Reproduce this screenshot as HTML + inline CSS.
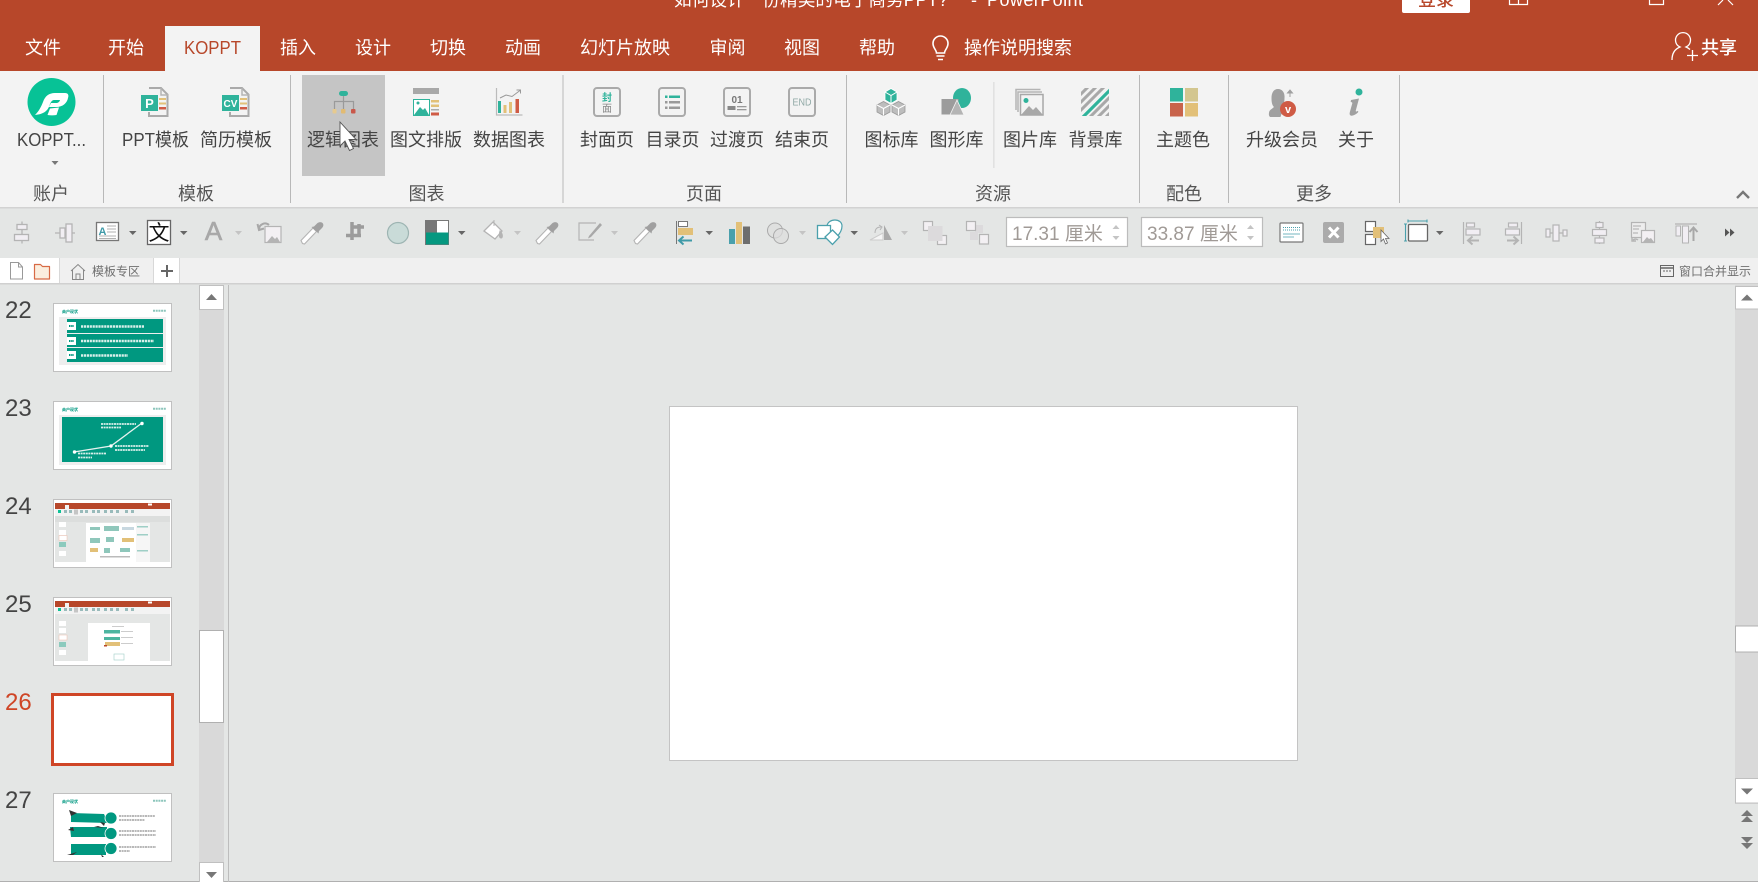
<!DOCTYPE html>
<html lang="zh"><head><meta charset="utf-8"><title>PowerPoint</title>
<style>
html,body{margin:0;padding:0;width:1758px;height:882px;overflow:hidden;background:#e4e6e5}
svg{position:absolute;left:0;top:0;display:block}
text{font-family:"Liberation Sans","Noto Sans CJK SC",sans-serif}
.tab{font-size:18px;fill:#fff;text-anchor:middle}
.lb{font-size:18px;fill:#444;text-anchor:middle}
.gr{font-size:18px;fill:#555;text-anchor:middle}
.num{font-size:24px;fill:#444}
.o{fill:none;stroke:#aaa;stroke-width:2}
.g{fill:none;stroke:#b4b4b4;stroke-width:1.5}
</style></head><body>
<svg width="1758" height="882" viewBox="0 0 1758 882" xmlns="http://www.w3.org/2000/svg">
<defs>
<filter id="b" x="40" y="295" width="140" height="575" filterUnits="userSpaceOnUse"><feGaussianBlur stdDeviation="0.35"/></filter>
<clipPath id="hc"><rect x="1081" y="88" width="28" height="28"/></clipPath>
</defs>
<!-- backgrounds -->
<rect width="1758" height="882" fill="#e4e6e5"/>
<rect width="1758" height="71" fill="#b7472a"/>
<rect y="71" width="1758" height="136" fill="#f3f3f3"/>
<rect y="207" width="1758" height="1.5" fill="#d2d2d2"/>
<rect y="258" width="1758" height="25" fill="#f0f0f0"/>
<rect y="283" width="1758" height="1.5" fill="#d0d0d0"/>
<rect y="258" width="59" height="25" fill="#fff"/>
<rect x="153" y="258" width="26" height="25" fill="#fff"/>
<rect x="59" y="258" width="1" height="25" fill="#d8d8d8"/>
<rect x="153" y="258" width="1" height="25" fill="#d8d8d8"/>
<rect x="179" y="258" width="1" height="25" fill="#d8d8d8"/>
<rect y="881" width="1758" height="1" fill="#b0b0b0"/>

<!-- title -->
<text x="674" y="6" font-size="18" fill="#fff" textLength="274" lengthAdjust="spacingAndGlyphs">如何设计一份精美的电子商务PPT?</text>
<text x="971" y="6" font-size="18" fill="#fff">-</text>
<text x="987" y="6" font-size="18" fill="#fff" textLength="96" lengthAdjust="spacing">PowerPoint</text>
<path d="M1402 0h68v11a2 2 0 0 1-2 2h-64a2 2 0 0 1-2-2z" fill="#fff"/>
<text x="1436" y="6" font-size="18" fill="#b7472a" text-anchor="middle" font-weight="500">登录</text>
<path d="M1509.500 0v4.500h18V0M1518.500 0v4.500" fill="none" stroke="#fff" stroke-width="1.200"/>
<path d="M1649.500 0v4.500h14V0" fill="none" stroke="#fff" stroke-width="1.200"/>
<path d="M1718 5l5-5M1733 5l-5-5" fill="none" stroke="#fff" stroke-width="1.200"/>

<!-- tabs -->
<rect x="165" y="26" width="95" height="45" fill="#f3f3f3"/>
<text class="tab" x="43" y="54">文件</text>
<text class="tab" x="126" y="54">开始</text>
<text class="tab" x="212.500" y="54" style="fill:#b7472a" textLength="57" lengthAdjust="spacingAndGlyphs">KOPPT</text>
<text class="tab" x="298" y="54">插入</text>
<text class="tab" x="373" y="54">设计</text>
<text class="tab" x="448" y="54">切换</text>
<text class="tab" x="523" y="54">动画</text>
<text class="tab" x="625" y="54">幻灯片放映</text>
<text class="tab" x="727.500" y="54">审阅</text>
<text class="tab" x="802" y="54">视图</text>
<text class="tab" x="877" y="54">帮助</text>
<path d="M936.500 53c0-3-3.500-5-3.500-9.500a7.500 7.500 0 0 1 15 0c0 4.500-3.500 6.500-3.500 9.500zM936.500 56h8M938 59.500h5" fill="none" stroke="#fff" stroke-width="1.600"/>
<text class="tab" x="1018" y="54">操作说明搜索</text>
<path d="M1672 60c0-7 3-11 8-13a7.500 7.500 0 1 1 6 0c1.500.6 3 1.500 4 2.500M1687 55.500h11M1692.500 50v11" fill="none" stroke="#fff" stroke-width="1.300"/>
<text class="tab" x="1719" y="54" font-weight="500">共享</text>

<!-- ribbon separators -->
<g fill="#b8b8b8">
<rect x="103" y="75" width="1" height="128"/><rect x="290" y="75" width="1" height="128"/><rect x="562.500" y="75" width="1" height="128"/>
<rect x="846" y="75" width="1" height="128"/><rect x="1139" y="75" width="1" height="128"/><rect x="1228" y="75" width="1" height="128"/><rect x="1399" y="75" width="1" height="128"/>
<rect x="993.500" y="82" width=".8" height="86" fill="#cfcfcf"/>
</g>
<rect x="302" y="75" width="83" height="101" fill="#c5c5c5"/>

<!-- logo -->
<ellipse cx="51.500" cy="102" rx="24" ry="24" fill="#07c296"/>
<path d="M35 115c4-4 6-8 8-13 2-6 6-9 12-9h10c3 0 4 2 3 5-1 5-5 9-12 9h-7l2-4h5c2 0 3.500-1 4-3H54c-2 0-3 2-4 4-2 7-6 10-15 11z" fill="#fff"/>
<path d="M50 108.500l9-1-2.500 7.500c-3 .5-6 .5-9 0z" fill="#fff"/>
<text class="lb" x="51.500" y="146" textLength="69" lengthAdjust="spacingAndGlyphs">KOPPT...</text>
<path d="M51.500 161h7l-3.500 4z" fill="#777"/>

<!-- PPT / CV -->
<path d="M149 88h12l6.500 6.500V116H149V112" class="o" stroke-width="1.500"/><path d="M161 88v7h7" class="g"/>
<rect x="141" y="95" width="17" height="16" fill="#2fb39b"/><text x="149.500" y="108" font-size="13" font-weight="700" fill="#fff" text-anchor="middle">P</text>
<rect x="159" y="98" width="7" height="2" fill="#e2c078"/><rect x="159" y="102.500" width="7" height="2" fill="#e2c078"/><rect x="159" y="107" width="7" height="2.500" fill="#cf5b45"/>
<path d="M230 88h12l6.500 6.500V116H230V112" class="o" stroke-width="1.500"/><path d="M242 88v7h7" class="g"/>
<rect x="222" y="95" width="17" height="16" fill="#2fb39b"/><text x="230.500" y="107" font-size="10" font-weight="700" fill="#fff" text-anchor="middle">CV</text>
<rect x="240" y="98" width="7" height="2" fill="#e2c078"/><rect x="240" y="102.500" width="7" height="2" fill="#e2c078"/><rect x="240" y="107" width="7" height="2.500" fill="#cf5b45"/>

<!-- logic -->
<rect x="339" y="91" width="9" height="5" rx="2.500" fill="#2fb39b"/>
<path d="M343.500 96v13M334.500 109v-7.500h19V109" fill="none" stroke="#9a9a9a" stroke-width="1.200"/>
<rect x="332.500" y="109" width="4" height="4.500" rx="1" fill="#e6ca8f"/><rect x="341" y="109" width="4.500" height="4.500" rx="1" fill="#e2bb72"/><rect x="351" y="109" width="4.500" height="4.500" rx="1" fill="#c9584a"/>

<!-- image text -->
<rect x="413" y="88" width="26" height="6" fill="#a8a8a8"/>
<rect x="413.500" y="99.500" width="16" height="16" fill="#fff" stroke="#2fb39b"/>
<path d="M414 115l6-8 3 3 2-2 4 7z" fill="#2fb39b"/><circle cx="418" cy="103" r="1.500" fill="#2fb39b"/>
<rect x="431" y="100" width="8" height="2.500" fill="#e2c078"/><rect x="431" y="104.500" width="8" height="2.500" fill="#e2c078"/><rect x="431" y="109" width="8" height="1.500" fill="#aaa"/><rect x="431" y="112.500" width="8" height="3" fill="#cf5b45"/>

<!-- data -->
<path d="M496.500 88v27h26" fill="none" stroke="#bbb" stroke-width="1.200"/>
<path d="M500 98l6-3 6 1.500 8-6M516.500 90h4v3.500" fill="none" stroke="#999" stroke-width="1"/>
<rect x="498" y="101" width="3" height="12" fill="#2fb39b"/><rect x="503.500" y="105" width="3" height="8" fill="#e2c078"/><rect x="509" y="102" width="3" height="11" fill="#e2c078"/><rect x="515.500" y="99" width="3.500" height="14" fill="#cf5b45"/>

<!-- page icons -->
<g fill="#f3f3f3" stroke="#aaa" stroke-width="2"><rect x="594" y="88" width="26" height="28" rx="3"/><rect x="659" y="88" width="26" height="28" rx="3"/><rect x="724" y="88" width="26" height="28" rx="3"/><rect x="789" y="88" width="26" height="28" rx="3"/></g>
<text x="607" y="101" font-size="10" font-weight="700" fill="#2fb39b" text-anchor="middle">封</text>
<text x="607" y="112" font-size="10" fill="#888" text-anchor="middle">面</text>
<g fill="#2fb39b"><rect x="665" y="95.500" width="2.500" height="2.500"/><rect x="669" y="95.500" width="11" height="2.500"/></g>
<g fill="#999"><rect x="665" y="101" width="2.500" height="2.500"/><rect x="669" y="101" width="11" height="2.500"/><rect x="665" y="106.500" width="2.500" height="2.500"/><rect x="669" y="106.500" width="11" height="2.500"/></g>
<text x="737" y="103" font-size="10" font-weight="700" fill="#777" text-anchor="middle">01</text>
<rect x="727.500" y="106" width="8" height="4" fill="#888"/><rect x="737" y="106" width="9.500" height="1.300" fill="#999"/><rect x="737" y="109" width="9.500" height="1.300" fill="#999"/>
<text x="802" y="105.500" font-size="10" fill="#8fa8a5" text-anchor="middle" textLength="19" lengthAdjust="spacingAndGlyphs">END</text>

<!-- icon lib -->
<path d="M885 92l6-3.500 6 3.500v8l-6 3.500-6-3.500z" fill="#2fb39b" stroke="#fff" stroke-width=".8"/><path d="M885 92l6 3.500 6-3.500M891 95.500v8" fill="none" stroke="#fff" stroke-width="1"/>
<path d="M877 105l6.500-3.500L890 105v7l-6.500 3.500L877 112z" fill="#bdbdbd" stroke="#999" stroke-width=".8"/><path d="M877 105l6.500 3.500L890 105M883.500 108.500v7" fill="none" stroke="#fff"/>
<path d="M892 105l6.500-3.500L905 105v7l-6.500 3.500L892 112z" fill="#bdbdbd" stroke="#999" stroke-width=".8"/><path d="M892 105l6.500 3.500L905 105M898.500 108.500v7" fill="none" stroke="#fff"/>

<!-- shape lib -->
<ellipse cx="962" cy="98" rx="9" ry="10" fill="#2fb39b"/>
<rect x="941.500" y="99" width="17" height="15.500" fill="#9c9c9c"/>
<path d="M957 100l7 15h-14z" fill="#b4b4b4" stroke="#f3f3f3" stroke-width=".8"/>

<!-- picture lib -->
<path d="M1016 110V89.500h24.500" class="g"/><path d="M1018 112V92h24" class="g"/>
<rect x="1020.500" y="94.500" width="22.500" height="20.500" fill="#f3f3f3" stroke="#a8a8a8" stroke-width="1.500"/>
<circle cx="1026" cy="100.500" r="2.500" fill="#2fb39b"/><path d="M1021 115l8-9 4 4 3-3 7 8z" fill="#a8a8a8"/>

<!-- bg lib -->
<g clip-path="url(#hc)">
<g stroke="#a8a8a8" stroke-width="3" fill="none"><path d="M1078 97l12-12M1078 105l20-20M1078 113l28-28M1088 119l24-24M1096 119l16-16M1104 119l8-8"/></g>
<path d="M1081 119l31-31" stroke="#2fb39b" stroke-width="3.200" fill="none"/></g>

<!-- theme -->
<rect x="1170" y="88" width="13" height="13.500" fill="#2fb39b"/><rect x="1185" y="88" width="13" height="13.500" fill="#d3c68f"/>
<rect x="1170" y="103" width="13" height="13.500" fill="#c8634b"/><rect x="1185" y="103" width="13" height="13.500" fill="#e2c078"/>

<!-- upgrade -->
<path d="M1269 113c0-3 3-4 5-6-2-2-2.500-5-2.500-9 0-5 2-9 6.500-9s7 4 6.500 9c0 4-1 7-2 9l1 1-3 9h-10c-1 0-2-2-1.500-4z" fill="#a0a0a0"/>
<path d="M1290 97v-5M1287.500 93l2.500-3 2.500 3z" stroke="#a0a0a0" stroke-width="1" fill="#a0a0a0"/>
<circle cx="1288" cy="109" r="8" fill="#cf5b45"/><text x="1288" y="113" font-size="11" font-weight="700" fill="#fff" text-anchor="middle">v</text>

<!-- info -->
<circle cx="1359" cy="92" r="3.500" fill="#2fb39b"/>
<path d="M1351 100l8-1.500-3.200 12c-.3 1.200.6 1.400 2 .4l.6 1c-2.500 3-6.500 4.500-8 3.500-1-.8-.9-2-.5-3.500l2.400-8.500c.2-1-.5-1.400-1.600-1.400z" fill="#a0a0a0"/>

<!-- ribbon labels -->
<text class="lb" x="155.500" y="146" textLength="67" lengthAdjust="spacingAndGlyphs">PPT模板</text>
<text class="lb" x="236" y="146">简历模板</text>
<text class="lb" x="343" y="146">逻辑图表</text>
<text class="lb" x="426" y="146">图文排版</text>
<text class="lb" x="509" y="146">数据图表</text>
<text class="lb" x="607" y="146">封面页</text>
<text class="lb" x="672.500" y="146">目录页</text>
<text class="lb" x="737" y="146">过渡页</text>
<text class="lb" x="802" y="146">结束页</text>
<text class="lb" x="891.500" y="146">图标库</text>
<text class="lb" x="956.500" y="146">图形库</text>
<text class="lb" x="1030" y="146">图片库</text>
<text class="lb" x="1095.500" y="146">背景库</text>
<text class="lb" x="1183" y="146">主题色</text>
<text class="lb" x="1282" y="146">升级会员</text>
<text class="lb" x="1356" y="146">关于</text>
<!-- cursor -->
<path d="M340 122v24l5-5 4.500 9.500 4-2-4.500-9h7z" fill="#fff" stroke="#555" stroke-width=".9"/>

<text class="gr" x="51" y="200">账户</text>
<text class="gr" x="196" y="200">模板</text>
<text class="gr" x="426.500" y="200">图表</text>
<text class="gr" x="704" y="200">页面</text>
<text class="gr" x="993" y="200">资源</text>
<text class="gr" x="1184" y="200">配色</text>
<text class="gr" x="1314" y="200">更多</text>
<path d="M1737 198l6-6 6 6" fill="none" stroke="#777" stroke-width="2.400"/>

<!-- toolbar -->
<g fill="#f1eef3" stroke="#b4b4b4" stroke-width="1.300">
<path d="M22 221.500v22" fill="none"/><rect x="17" y="224.500" width="10" height="5"/><rect x="14.500" y="234.500" width="14" height="6"/>
<path d="M55 233h20" fill="none"/><rect x="60" y="228" width="5" height="10"/><rect x="66" y="224" width="6" height="18"/>
</g>
<rect x="96.500" y="222.500" width="22" height="18" fill="#fff" stroke="#777" stroke-width="1.300"/>
<text x="102.500" y="235" font-size="11" font-weight="700" fill="#3f9aa8" text-anchor="middle">A</text>
<path d="M107 226h9M107 229h9M107 232h9M99 236h17M99 238.500h17" stroke="#999" stroke-width=".8"/>
<path d="M129 231h7.500l-3.750 4z" fill="#666"/>
<rect x="147.500" y="220.500" width="23" height="24" fill="#fff" stroke="#666" stroke-width="1.300"/>
<text x="159" y="240" font-size="21" fill="#111" text-anchor="middle">文</text>
<path d="M180 231h7.500l-3.750 4z" fill="#666"/>
<text x="213.500" y="240" font-size="26" font-weight="400" fill="#a8a8a8" text-anchor="middle" stroke="#a8a8a8" stroke-width=".6">A</text>
<path d="M235 231h7l-3.500 4z" fill="#c4c4c4"/>
<rect x="265" y="226.500" width="16" height="16" fill="#f3f0f3" stroke="#b4b4b4" stroke-width="1.200"/>
<path d="M267 242l5-6 3 3 2-2 3 5z" fill="#b4b4b4"/>
<path d="M259 229a6 6 0 0 1 10-4M257.500 224l1.500 6 5-1.500" fill="none" stroke="#a8a8a8" stroke-width="2"/>
<!-- eyedroppers -->
<g id="ed"><path d="M302.500 243.500l-1.500-3 12-12.500 3.500 3.500L304.500 244z" fill="#fff" stroke="#b4b4b4" stroke-width="1.100"/><path d="M311.500 227l2.500-.5 3-3c2-2 4.500-1.500 5.500-.5s1.500 3-.5 5l-3 3-.5 2.500z" fill="#a0a0a0"/></g>
<!-- crop -->
<path d="M352 222v18M346 235.500h15M359 224v12M352 227h12" fill="none" stroke="#9c9c9c" stroke-width="3.500"/>
<ellipse cx="398" cy="233" rx="10.500" ry="10.500" fill="#c9dbd8" stroke="#9db4b2" stroke-width="1.200"/>
<rect x="425.500" y="220.500" width="23" height="24" fill="#fff" stroke="#777" stroke-width="1"/>
<rect x="426" y="221" width="11" height="12" fill="#777"/><rect x="426" y="232.500" width="22.500" height="12" fill="#059880"/>
<path d="M458 231h7.500l-3.750 4z" fill="#666"/>
<path d="M484 231l9-9 9 9-7 8z" fill="#fff" stroke="#b4b4b4" stroke-width="1.300"/><path d="M494 220v6M500 231c3 3 3 7 1 7-2 0-2-4-1-7z" fill="#b4b4b4" stroke="#b4b4b4"/>
<path d="M514 231h7l-3.500 4z" fill="#c4c4c4"/>
<use href="#ed" x="235"/>
<path d="M596 223h-17v17h15" fill="none" stroke="#b4b4b4" stroke-width="1.200"/><path d="M589 236l11-13 2 2-11 12-3 1.500z" fill="#a8a8a8"/>
<path d="M611 231h7l-3.500 4z" fill="#c4c4c4"/>
<use href="#ed" x="333"/>
<!-- arrange -->
<path d="M676.500 221v23" stroke="#777" stroke-width="1"/>
<rect x="678.500" y="221.500" width="9" height="5" fill="#fff" stroke="#777"/>
<rect x="678" y="228" width="15" height="7" fill="#e2c078"/>
<path d="M692 240.500h-12M683.500 236.500l-4.500 4 4.500 4" fill="none" stroke="#3f9aa8" stroke-width="2"/>
<path d="M705.500 231h7.500l-3.750 4z" fill="#666"/>
<rect x="729" y="229" width="6" height="15" fill="#4aa0ac"/><rect x="736" y="222" width="6" height="22" fill="#e2c078"/><rect x="743" y="226.500" width="7" height="17.500" fill="#6e6e6e"/>
<g fill="#ddd" fill-opacity=".7" stroke="#aaa" stroke-width="1"><circle cx="775" cy="230.500" r="7.500"/><circle cx="781" cy="236" r="7.500"/></g>
<path d="M799 231h7l-3.500 4z" fill="#c4c4c4"/>
<path d="M827 226c1-8 15-8 15 0 0 5-3 8-5 11l-10-5z" fill="#fff" stroke="#4aa0ac" stroke-width="1.200"/>
<rect x="817.500" y="225.500" width="13" height="13" fill="#fff" stroke="#4aa0ac" stroke-width="1.300"/>
<path d="M832.500 230l7 7-7 7.500-7.500-7.500z" fill="#fff" stroke="#4aa0ac" stroke-width="1.300"/>
<path d="M850.500 231h7.500l-3.750 4z" fill="#666"/>
<path d="M870 240l13-7v7z" fill="#f5f5f5" stroke="#ccc"/><path d="M884 225l8 15h-8z" fill="#aaa"/><path d="M875 233c0-4 2-6 6-6M879 225l3 2-2 3" fill="none" stroke="#b4b4b4" stroke-width="1"/>
<path d="M901 231h7l-3.500 4z" fill="#c4c4c4"/>
<rect x="923.500" y="221.500" width="9" height="9" fill="#f3f0f3" stroke="#b4b4b4" stroke-width="1.200"/><rect x="937.500" y="235.500" width="9" height="9" fill="#f3f0f3" stroke="#b4b4b4" stroke-width="1.200"/><rect x="928" y="226" width="14.500" height="15" fill="#dcdadc"/>
<rect x="975" y="225" width="8" height="8" fill="#dcdadc"/><rect x="970" y="232" width="8" height="8" fill="#dcdadc"/>
<rect x="966.500" y="221.500" width="9" height="9" fill="#f3f0f3" stroke="#b4b4b4" stroke-width="1.200"/><rect x="979.500" y="234.500" width="9" height="9.500" fill="#f3f0f3" stroke="#b4b4b4" stroke-width="1.200"/>
<!-- inputs -->
<rect x="1006.500" y="217.500" width="121" height="29" fill="#fff" stroke="#bcbcbc" stroke-width="1.200"/>
<text x="1012" y="240" font-size="19" fill="#a09a96">17.31 厘米</text>
<path d="M1112.500 229l3.500-4 3.500 4zM1112.500 236l3.500 4 3.500-4z" fill="#c4c4c4"/>
<rect x="1141.500" y="217.500" width="121" height="29" fill="#fff" stroke="#bcbcbc" stroke-width="1.200"/>
<text x="1147" y="240" font-size="19" fill="#a09a96">33.87 厘米</text>
<path d="M1247 229l3.500-4 3.500 4zM1247 236l3.500 4 3.500-4z" fill="#c4c4c4"/>
<!-- right tools -->
<rect x="1280" y="223" width="23" height="19" rx="1" fill="#fff" stroke="#777" stroke-width="1.200"/>
<path d="M1283 227.500h17M1283 230h17" stroke="#4aa0ac" stroke-width="1" stroke-dasharray="1 1"/><path d="M1283 234h17M1283 237h11" stroke="#4aa0ac" stroke-width=".8"/>
<rect x="1323" y="222" width="21" height="21" rx="2" fill="#ababab"/><path d="M1329 227.500l9.500 10M1338.500 227.500l-9.500 10" stroke="#fff" stroke-width="3"/>
<rect x="1365.500" y="221.500" width="10" height="10" fill="#fff" stroke="#666" stroke-width="1.200"/><rect x="1365.500" y="234.500" width="10" height="10" fill="#fff" stroke="#666" stroke-width="1.200"/>
<rect x="1373" y="227" width="11" height="11" fill="#e2c078"/>
<path d="M1381 230v11.500l2.500-2.500 2 5 2-1-2-4.500h3.500z" fill="#fff" stroke="#666" stroke-width=".8"/>
<rect x="1408.500" y="224.500" width="19" height="16.500" rx="1" fill="#fff" stroke="#666" stroke-width="1.300"/>
<path d="M1408 221h19M1408 219.500v3M1427 219.500v3M1405.500 224v17M1404 224h3M1404 241h3" fill="none" stroke="#4aa0ac" stroke-width="1.100"/>
<path d="M1436 231h7.500l-3.750 4z" fill="#666"/>
<g fill="#f1eef3" stroke="#b4b4b4" stroke-width="1.200">
<path d="M1463.500 222v22" fill="none"/><rect x="1466.500" y="223" width="8" height="4"/><rect x="1466" y="229" width="14" height="6"/>
<path d="M1521.500 222v22" fill="none"/><rect x="1508.500" y="223" width="9" height="4"/><rect x="1505.500" y="229" width="14" height="6"/>
<path d="M1546 233h21" fill="none"/><rect x="1546" y="229" width="4" height="8"/><rect x="1553" y="225" width="6" height="16"/><rect x="1563" y="230" width="4" height="6"/>
<path d="M1599.500 221v23" fill="none"/><rect x="1596" y="222.500" width="7" height="5"/><rect x="1592.500" y="229.500" width="14" height="6"/><rect x="1595" y="238" width="9" height="5"/>
</g>
<path d="M1479 240.500h-11M1472.500 236.500l-4.500 4 4.500 4M1507 240.500h11M1513.500 236.500l4.500 4-4.500 4" fill="none" stroke="#b4b4b4" stroke-width="2"/>
<rect x="1631.500" y="222.500" width="14" height="15" fill="#ededed" stroke="#b4b4b4" stroke-width="1.200"/>
<path d="M1633 226h8M1633 229h6M1633 233h5" stroke="#aaa" stroke-width="1"/>
<rect x="1641.500" y="230.500" width="13" height="12" fill="#f3f0f3" stroke="#b4b4b4" stroke-width="1.200"/>
<path d="M1643 242l4-5 2 2 2-1 3 4z" fill="#b4b4b4"/><path d="M1638 240a4 4 0 0 0-5 0M1632 237v4h4" fill="none" stroke="#b4b4b4" stroke-width="1.400"/>
<path d="M1675 224h22" stroke="#b4b4b4" stroke-width="1.200"/>
<rect x="1676" y="226" width="4.500" height="10" fill="#f1eef3" stroke="#b4b4b4"/><rect x="1682.500" y="226" width="6" height="17" fill="#f1eef3" stroke="#b4b4b4"/>
<path d="M1693.500 241v-13M1689.500 232l4-4.500 4 4.500" fill="none" stroke="#a8a8a8" stroke-width="2"/>
<path d="M1725 228.500l4.500 4-4.500 4zM1730 228.500l4.500 4-4.500 4z" fill="#555"/>

<!-- tab row -->
<path d="M10.500 262.500h8l4 4.500v12h-12zM18.500 262.500v4.500h4" fill="#fff" stroke="#999" stroke-width="1"/>
<path d="M34.500 264.500h6l2 2h7v12.500h-15z" fill="#fbeede" stroke="#d86a45" stroke-width="1.200" stroke-linejoin="round"/>
<path d="M71 271l7-6.500 7 6.500M72.500 270v9.500h11V270M76 279.500v-5.500h4v5.500" fill="none" stroke="#888" stroke-width="1"/>
<text x="92" y="275.500" font-size="12" fill="#6f6f6f">模板专区</text>
<path d="M161 271h12M167 265v12" stroke="#666" stroke-width="2"/>
<rect x="1660.500" y="265.500" width="13" height="11" fill="none" stroke="#666" stroke-width="1"/><path d="M1660.500 268h13" stroke="#666" stroke-width="1.500"/><path d="M1663 271h8" stroke="#666" stroke-dasharray="2 1"/>
<text x="1679" y="275.500" font-size="12" fill="#6f6f6f">窗口合并显示</text>

<!-- left scrollbar -->
<rect x="199" y="285" width="25" height="597" fill="#d9d9d9"/>
<rect x="199.500" y="285.500" width="24" height="24" fill="#fff" stroke="#c0c0c0"/>
<path d="M206 300l5.500-6 5.500 6z" fill="#777"/>
<rect x="199.500" y="630.500" width="24" height="92" fill="#fff" stroke="#b0b0b0"/>
<rect x="199.500" y="862.500" width="24" height="20" fill="#fff" stroke="#c0c0c0"/>
<path d="M206 872l5.500 6 5.500-6z" fill="#777"/>
<rect x="228" y="285" width="1" height="597" fill="#bdbdbd"/>

<!-- numbers -->
<text class="num" x="5" y="318">22</text>
<text class="num" x="5" y="416">23</text>
<text class="num" x="5" y="514">24</text>
<text class="num" x="5" y="612">25</text>
<text class="num" x="5" y="710" style="fill:#cf4526">26</text>
<text class="num" x="5" y="808">27</text>

<!-- thumb frames -->
<rect x="53.500" y="303.500" width="118" height="68" fill="#fff" stroke="#c0c0c0"/>
<rect x="53.500" y="401.500" width="118" height="68" fill="#fff" stroke="#c0c0c0"/>
<rect x="53.500" y="499.500" width="118" height="68" fill="#fff" stroke="#c0c0c0"/>
<rect x="53.500" y="597.500" width="118" height="68" fill="#fff" stroke="#c0c0c0"/>
<rect x="53.500" y="793.500" width="118" height="68" fill="#fff" stroke="#c0c0c0"/>
<g filter="url(#b)">
<!-- thumb 22 -->
<text x="62" y="313" font-size="4" font-weight="700" fill="#059880">商户现状</text>
<path d="M153 310.700h13" stroke="#8cc5bb" stroke-width="2" stroke-dasharray="2 .7"/>
<rect x="59" y="317" width="107" height="48" fill="#eeeeee"/>
<rect x="67" y="319" width="96" height="14" fill="#059880"/><rect x="67" y="334" width="96" height="13" fill="#059880"/><rect x="67" y="348" width="96" height="14" fill="#059880"/>
<rect x="67" y="322" width="9" height="8" fill="#fff"/><rect x="67" y="337" width="9" height="8" fill="#fff"/><rect x="67" y="351" width="9" height="8" fill="#fff"/>
<path d="M69 326h5M69 341h5M69 355h5" stroke="#059880" stroke-width="2" stroke-dasharray="1.500 .7"/>
<g fill="none" stroke="#d8efea" stroke-width="2.400" stroke-dasharray="2.200 .7"><path d="M81 326.500h63M81 341h73M81 355.500h47"/></g>

<!-- thumb 23 -->
<text x="62" y="411" font-size="4" font-weight="700" fill="#059880">商户现状</text>
<path d="M153 408.700h13" stroke="#8cc5bb" stroke-width="2" stroke-dasharray="2 .7"/>
<rect x="59" y="415" width="107" height="50" fill="#eeeeee"/>
<rect x="62" y="417" width="101" height="45" fill="#059880"/>
<path d="M74 452l37-6 31-23" fill="none" stroke="#e6f2ef" stroke-width="1.300"/>
<circle cx="74.500" cy="452" r="1.700" fill="#fff"/><circle cx="111" cy="446" r="1.700" fill="#fff"/><circle cx="142" cy="423.500" r="1.700" fill="#fff"/>
<g fill="none" stroke="#d8efea" stroke-width="1.800" stroke-dasharray="2 .6"><path d="M101 424h35M101 427.500h20M115 446h34M115 450h30M78 453.500h28M78 457.500h14"/></g>

<!-- thumb 24 -->
<rect x="55" y="503" width="115" height="6" fill="#b7472a"/>
<rect x="65" y="505" width="4" height="4" fill="#f3f3f3"/><rect x="148" y="503.500" width="4" height="2" fill="#fff"/>
<rect x="55" y="509" width="115" height="7" fill="#f3f3f3"/>
<rect x="74" y="509.500" width="4" height="5" fill="#c5c5c5"/>
<g fill="#9bb"><rect x="58" y="510" width="3" height="3" fill="#07c296"/><rect x="64" y="510" width="3" height="3"/><rect x="69" y="510" width="3" height="3"/><rect x="80" y="510" width="3" height="3"/><rect x="85" y="510" width="3" height="3"/><rect x="92" y="510" width="3" height="3"/><rect x="97" y="510" width="3" height="3"/><rect x="104" y="510" width="3" height="3"/><rect x="110" y="510" width="3" height="3"/><rect x="116" y="510" width="3" height="3"/><rect x="125" y="510" width="3" height="3"/><rect x="131" y="510" width="3" height="3"/></g>
<rect x="55" y="516" width="115" height="6" fill="#dcdedd"/><rect x="55" y="522" width="115" height="40" fill="#e4e6e5"/>
<rect x="86" y="523" width="64" height="39" fill="#fff"/>
<g fill="#fff"><rect x="59" y="522" width="7" height="5"/><rect x="59" y="530" width="7" height="5"/><rect x="59" y="535.500" width="8" height="5" stroke="#eebbaa" stroke-width=".5"/><rect x="59" y="551" width="7" height="5"/></g>
<rect x="59" y="542" width="7" height="5" fill="#8ccabd"/>
<g fill="#8fc7bb"><rect x="90" y="527" width="10" height="3"/><rect x="104" y="526" width="15" height="5"/><rect x="122" y="527" width="12" height="3" fill="#c8d8e0"/><rect x="90" y="538" width="10" height="5"/><rect x="106" y="537" width="8" height="5"/><rect x="122" y="538" width="12" height="4" fill="#e2c078"/><rect x="90" y="548" width="8" height="4" fill="#e2c078"/><rect x="104" y="548" width="6" height="5"/><rect x="120" y="548" width="10" height="4"/></g>
<rect x="100" y="556" width="30" height="1.500" fill="#bbb"/>
<rect x="136" y="523" width="14" height="39" fill="#f6f6f6"/>
<g fill="#9fcfc6"><rect x="137" y="526" width="11" height="1.500"/><rect x="137" y="534" width="11" height="1.500"/><rect x="137" y="550" width="11" height="1.500"/></g>

<!-- thumb 25 -->
<rect x="55" y="601" width="115" height="6" fill="#b7472a"/>
<rect x="65" y="603" width="4" height="4" fill="#f3f3f3"/><rect x="148" y="601.500" width="4" height="2" fill="#fff"/>
<rect x="55" y="607" width="115" height="7" fill="#f3f3f3"/>
<rect x="74" y="607.500" width="4" height="5" fill="#c5c5c5"/>
<g fill="#9bb"><rect x="58" y="608" width="3" height="3" fill="#07c296"/><rect x="64" y="608" width="3" height="3"/><rect x="69" y="608" width="3" height="3"/><rect x="80" y="608" width="3" height="3"/><rect x="85" y="608" width="3" height="3"/><rect x="92" y="608" width="3" height="3"/><rect x="97" y="608" width="3" height="3"/><rect x="104" y="608" width="3" height="3"/><rect x="110" y="608" width="3" height="3"/><rect x="116" y="608" width="3" height="3"/><rect x="125" y="608" width="3" height="3"/><rect x="131" y="608" width="3" height="3"/></g>
<rect x="55" y="614" width="115" height="47" fill="#e4e6e5"/>
<rect x="88" y="623" width="62" height="38" fill="#fff"/>
<g fill="#fff"><rect x="59" y="621" width="7" height="5"/><rect x="59" y="628" width="7" height="5"/><rect x="59" y="635" width="8" height="5" stroke="#eebbaa" stroke-width=".5"/><rect x="59" y="650" width="7" height="5"/></g>
<rect x="59" y="642" width="7" height="5" fill="#8ccabd"/>
<rect x="104" y="630" width="16" height="3.500" fill="#4db5a0"/><rect x="104" y="637" width="16" height="3" fill="#4db5a0"/><rect x="105" y="642" width="15" height="4" fill="#e2c078"/>
<g fill="#ccc"><rect x="121" y="631" width="12" height="1"/><rect x="121" y="637" width="12" height="1"/><rect x="121" y="643" width="12" height="1"/><rect x="112" y="626" width="12" height="1"/></g>
<rect x="104" y="645" width="3" height="1.500" fill="#b7472a"/>
<rect x="114" y="654" width="10" height="6" fill="#fff" stroke="#9fcfc6" stroke-width=".6"/>

<!-- thumb 27 -->
<text x="62" y="803" font-size="4" font-weight="700" fill="#059880">商户现状</text>
<path d="M153 800.700h13" stroke="#8cc5bb" stroke-width="2" stroke-dasharray="2 .7"/>
<path d="M71 813l33 1 4 9-37-1z" fill="#059880"/><path d="M69 810l8 3-6 3z" fill="#333"/><path d="M100 822l5 1-1 3z" fill="#333"/>
<path d="M70 827h37v10H71z" fill="#059880"/><path d="M68 830l5-3 1 4z" fill="#333"/><path d="M94 827l10 1-6-2z" fill="#333"/>
<path d="M71 844h35v11H71z" fill="#059880"/><path d="M67 855l10-3-4 3z" fill="#333"/><path d="M101 854l3 3-2 0z" fill="#333"/>
<g fill="#059880" stroke="#fff" stroke-width=".8"><circle cx="111" cy="818" r="6"/><circle cx="111" cy="833.500" r="6"/><circle cx="111" cy="848.500" r="6"/></g>
<g fill="none" stroke="#b8b8b8" stroke-width="2" stroke-dasharray="2 .6"><path d="M119 816h36M119 820h26M119 831h37M119 835h37M119 847h37M119 851h11"/></g>
</g>

<!-- thumb 26 -->
<rect x="52.500" y="694.500" width="120" height="70" fill="#fff" stroke="#cf4526" stroke-width="3"/>

<!-- main slide -->
<rect x="669.500" y="406.500" width="628" height="354" fill="#fff" stroke="#c4c4c4"/>

<!-- right scrollbar -->
<rect x="1735" y="285" width="23" height="519" fill="#d9d9d9"/>
<rect x="1735.500" y="286.500" width="23" height="22.500" fill="#fff" stroke="#c0c0c0"/>
<path d="M1741 300.500l6-6 6 6z" fill="#777"/>
<rect x="1735.500" y="626" width="23" height="26" fill="#fff" stroke="#b0b0b0"/>
<rect x="1735.500" y="778.500" width="23" height="24.500" fill="#fff" stroke="#c0c0c0"/>
<path d="M1741 788.500l6 6 6-6z" fill="#777"/>
<path d="M1741 816l6-6 6 6zM1741 822l6-6 6 6zM1741 837l6 6 6-6zM1741 843l6 6 6-6z" fill="#777"/>
</svg>
</body></html>
